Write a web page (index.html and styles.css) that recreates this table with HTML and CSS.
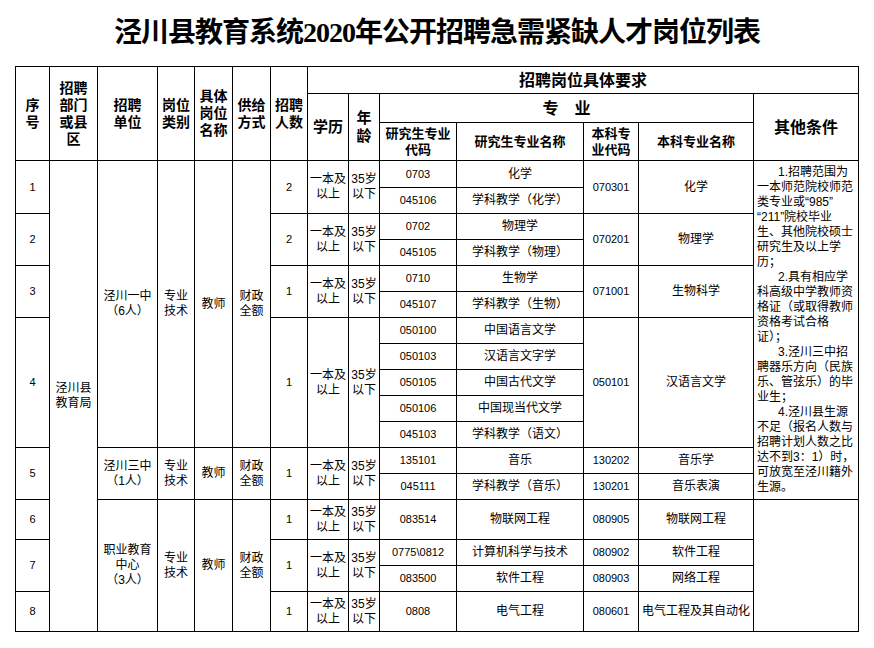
FILE: index.html
```html
<!DOCTYPE html>
<html lang="zh-CN">
<head>
<meta charset="utf-8">
<title>泾川县教育系统2020年公开招聘急需紧缺人才岗位列表</title>
<link rel="stylesheet" href="styles.css">
</head>
<body>
<div class="title">泾川县教育系统2020年公开招聘急需紧缺人才岗位列表</div>
<table class="grid">
<colgroup>
<col class="w34"><col class="w48"><col class="w60"><col class="w37"><col class="w38"><col class="w38"><col class="w37"><col class="w41"><col class="w31"><col class="w77"><col class="w127"><col class="w55"><col class="w115"><col class="w105">
</colgroup>
<thead>
<tr class="h27">
<th rowspan="3">序<br>号</th>
<th rowspan="3">招聘<br>部门<br>或县<br>区</th>
<th rowspan="3">招聘<br>单位</th>
<th rowspan="3">岗位<br>类别</th>
<th rowspan="3">具体<br>岗位<br>名称</th>
<th rowspan="3">供给<br>方式</th>
<th rowspan="3">招聘<br>人数</th>
<th colspan="7" class="big">招聘岗位具体要求</th>
</tr>
<tr class="h29">
<th rowspan="2" class="mid">学历</th>
<th rowspan="2" class="mid">年<br>龄</th>
<th colspan="4" class="big">专　业</th>
<th rowspan="2" class="big">其他条件</th>
</tr>
<tr class="h38">
<th class="sm">研究生专业<br>代码</th>
<th class="sm">研究生专业名称</th>
<th class="sm">本科专<br>业代码</th>
<th class="sm">本科专业名称</th>
</tr>
</thead>
<tbody>
<tr class="h27">
<td rowspan="2" class="n">1</td>
<td rowspan="17">泾川县<br>教育局</td>
<td rowspan="11">泾川一中<br>（6人）</td>
<td rowspan="11">专业<br>技术</td>
<td rowspan="11">教师</td>
<td rowspan="11">财政<br>全额</td>
<td rowspan="2" class="n">2</td>
<td rowspan="2">一本及<br>以上</td>
<td rowspan="2">35岁<br>以下</td>
<td class="n">0703</td>
<td>化学</td>
<td rowspan="2" class="n">070301</td>
<td rowspan="2">化学</td>
<td rowspan="13" class="note">
<div class="ind">1.招聘范围为</div>
<div>一本师范院校师范</div>
<div>类专业或“985”</div>
<div>“211”院校毕业</div>
<div>生、其他院校硕士</div>
<div>研究生及以上学</div>
<div>历；</div>
<div class="ind">2.具有相应学</div>
<div>科高级中学教师资</div>
<div>格证（或取得教师</div>
<div>资格考试合格</div>
<div>证）；</div>
<div class="ind">3.泾川三中招</div>
<div>聘器乐方向（民族</div>
<div>乐、管弦乐）的毕</div>
<div>业生；</div>
<div class="ind">4.泾川县生源</div>
<div>不足（报名人数与</div>
<div>招聘计划人数之比</div>
<div>达不到3：1）时，</div>
<div>可放宽至泾川籍外</div>
<div>生源。</div>
</td>
</tr>
<tr class="h26">
<td class="n">045106</td>
<td>学科教学（化学）</td>
</tr>
<tr class="h26">
<td rowspan="2" class="n">2</td>
<td rowspan="2" class="n">2</td>
<td rowspan="2">一本及<br>以上</td>
<td rowspan="2">35岁<br>以下</td>
<td class="n">0702</td>
<td>物理学</td>
<td rowspan="2" class="n">070201</td>
<td rowspan="2">物理学</td>
</tr>
<tr class="h26">
<td class="n">045105</td>
<td>学科教学（物理）</td>
</tr>
<tr class="h26">
<td rowspan="2" class="n">3</td>
<td rowspan="2" class="n">1</td>
<td rowspan="2">一本及<br>以上</td>
<td rowspan="2">35岁<br>以下</td>
<td class="n">0710</td>
<td>生物学</td>
<td rowspan="2" class="n">071001</td>
<td rowspan="2">生物科学</td>
</tr>
<tr class="h26">
<td class="n">045107</td>
<td>学科教学（生物）</td>
</tr>
<tr class="h26">
<td rowspan="5" class="n">4</td>
<td rowspan="5" class="n">1</td>
<td rowspan="5">一本及<br>以上</td>
<td rowspan="5">35岁<br>以下</td>
<td class="n">050100</td>
<td>中国语言文学</td>
<td rowspan="5" class="n">050101</td>
<td rowspan="5">汉语言文学</td>
</tr>
<tr class="h26">
<td class="n">050103</td>
<td>汉语言文字学</td>
</tr>
<tr class="h26">
<td class="n">050105</td>
<td>中国古代文学</td>
</tr>
<tr class="h26">
<td class="n">050106</td>
<td>中国现当代文学</td>
</tr>
<tr class="h26">
<td class="n">045103</td>
<td>学科教学（语文）</td>
</tr>
<tr class="h26">
<td rowspan="2" class="n">5</td>
<td rowspan="2">泾川三中<br>（1人）</td>
<td rowspan="2">专业<br>技术</td>
<td rowspan="2">教师</td>
<td rowspan="2">财政<br>全额</td>
<td rowspan="2" class="n">1</td>
<td rowspan="2">一本及<br>以上</td>
<td rowspan="2">35岁<br>以下</td>
<td class="n">135101</td>
<td>音乐</td>
<td class="n">130202</td>
<td>音乐学</td>
</tr>
<tr class="h26">
<td class="n">045111</td>
<td>学科教学（音乐）</td>
<td class="n">130201</td>
<td>音乐表演</td>
</tr>
<tr class="h40">
<td class="n">6</td>
<td rowspan="4">职业教育<br>中心<br>（3人）</td>
<td rowspan="4">专业<br>技术</td>
<td rowspan="4">教师</td>
<td rowspan="4">财政<br>全额</td>
<td class="n">1</td>
<td>一本及<br>以上</td>
<td>35岁<br>以下</td>
<td class="n">083514</td>
<td>物联网工程</td>
<td class="n">080905</td>
<td>物联网工程</td>
<td rowspan="4"></td>
</tr>
<tr class="h26">
<td rowspan="2" class="n">7</td>
<td rowspan="2" class="n">1</td>
<td rowspan="2">一本及<br>以上</td>
<td rowspan="2">35岁<br>以下</td>
<td class="n">0775\0812</td>
<td>计算机科学与技术</td>
<td class="n">080902</td>
<td>软件工程</td>
</tr>
<tr class="h26">
<td class="n">083500</td>
<td>软件工程</td>
<td class="n">080903</td>
<td>网络工程</td>
</tr>
<tr class="h40">
<td class="n">8</td>
<td class="n">1</td>
<td>一本及<br>以上</td>
<td>35岁<br>以下</td>
<td class="n">0808</td>
<td>电气工程</td>
<td class="n">080601</td>
<td>电气工程及其自动化</td>
</tr>
</tbody>
</table>
</body>
</html>
```
FILE: styles.css
```css
body {
  margin: 0;
  background: #fff;
  color: #000;
  font-family: "Liberation Sans", "Noto Sans CJK SC", sans-serif;
}

.title {
  height: 66px;
  display: flex;
  align-items: center;
  justify-content: center;
  font-family: "Liberation Serif", "Noto Sans CJK SC", serif;
  font-weight: 700;
  font-size: 28px;
  letter-spacing: -1px;
  line-height: 1;
}

.grid {
  margin-left: 15px;
  border-collapse: collapse;
  table-layout: fixed;
  width: 844px;
}

.grid th,
.grid td {
  border: 1px solid #000;
  padding: 0;
  text-align: center;
  vertical-align: middle;
  overflow: hidden;
  white-space: nowrap;
}

.grid th {
  font-family: "Liberation Sans", "Noto Sans CJK SC", sans-serif;
  font-weight: 700;
  font-size: 14px;
  line-height: 17px;
}

.grid th.big {
  font-size: 16px;
}

.grid th.mid {
  font-size: 15px;
  line-height: 18px;
}

.grid th.sm {
  font-size: 13px;
  line-height: 16px;
}

.grid td {
  font-size: 12px;
  line-height: 15px;
}

.grid td.n {
  font-size: 11px;
}

.grid td.note {
  text-align: left;
  padding-left: 3px;
  font-size: 12px;
  line-height: 15px;
}

.note .ind {
  text-indent: 21px;
}

.w34 { width: 34px; }
.w48 { width: 48px; }
.w60 { width: 60px; }
.w37 { width: 37px; }
.w38 { width: 38px; }
.w41 { width: 41px; }
.w31 { width: 31px; }
.w77 { width: 77px; }
.w127 { width: 127px; }
.w55 { width: 55px; }
.w115 { width: 115px; }
.w105 { width: 105px; }

.h26 { height: 26px; }
.h27 { height: 27px; }
.h29 { height: 29px; }
.h38 { height: 38px; }
.h40 { height: 40px; }
```
